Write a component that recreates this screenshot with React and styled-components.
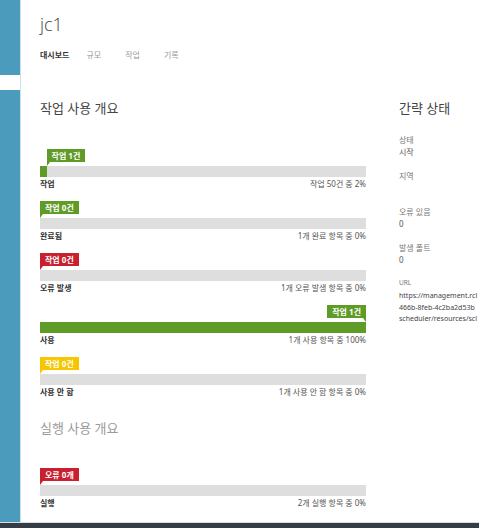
import React from "react";
import styled, { createGlobalStyle } from "styled-components";

const GlobalStyle = createGlobalStyle`
  html, body { margin: 0; padding: 0; height: 100%; }
  body {
    font-family: "Segoe UI", "Noto Sans", "Noto Sans CJK KR", sans-serif;
    background: #fff;
    overflow: hidden;
  }
  #root { height: 100%; }
`;

const Shell = styled.div`
  display: flex;
  flex-direction: column;
  height: 528px;
  overflow: hidden;
`;

const Workspace = styled.div`
  display: flex;
  flex: 1;
  min-height: 0;
`;

const Sidebar = styled.nav`
  width: 20px;
  flex: none;
  background: #4b9bbd;
  border-right: 1px solid #cfe0ea;
  display: flex;
  flex-direction: column;
`;

const SideMarker = styled.div`
  margin-top: 75px;
  height: 15px;
  background: #fff;
`;

const Footer = styled.footer`
  flex: none;
  height: 5px;
  border-top: 1px solid #d9dcdf;
  background: #343c46;
`;

const Content = styled.main`
  flex: 1;
  min-width: 0;
  padding-left: 19px;
  overflow: hidden;
`;

const Title = styled.h1`
  margin: 12px 0 0;
  font-family: "Segoe UI", "Open Sans", sans-serif;
  font-size: 18px;
  font-weight: 300;
  line-height: 24px;
  color: #444;
`;

const Tabs = styled.div`
  display: flex;
  margin-top: 13px;
`;

const Tab = styled.span`
  font-size: 8px;
  line-height: 12px;
  padding-right: ${(p) => (p.$active ? 17 : 24)}px;
  color: ${(p) => (p.$active ? "#333" : "#999")};
  font-weight: ${(p) => (p.$active ? 700 : 400)};
`;

const Body = styled.div`
  display: flex;
  margin-top: 39px;
`;

const MainColumn = styled.section`
  width: 326px;
  flex: none;
`;

const SideColumn = styled.aside`
  width: 200px;
  flex: none;
  margin-left: 33px;
`;

const Heading = styled.h2`
  margin: 0;
  font-size: 13px;
  line-height: 16px;
  font-weight: 400;
  color: ${(p) => (p.$muted ? "#9a9a9a" : "#444")};
`;

const Blocks = styled.div`
  margin-top: ${(p) => p.$top}px;
`;

const Block = styled.div`
  margin-bottom: 11px;
`;

const BadgeRow = styled.div`
  display: flex;
  justify-content: ${(p) => (p.$end ? "flex-end" : "flex-start")};
  height: 13px;
  margin-bottom: 4px;
`;

const Badge = styled.span`
  position: relative;
  height: 13px;
  line-height: 13px;
  padding: 0 5px;
  font-size: 8px;
  font-weight: 700;
  color: #fff;
  white-space: nowrap;
  background: ${(p) => p.$color};

  &::after {
    content: "";
    position: absolute;
    top: 100%;
    ${(p) => (p.$end ? "right: 0;" : "left: 0;")}
    border-top: 4px solid ${(p) => p.$color};
    ${(p) =>
      p.$end
        ? "border-left: 3px solid transparent;"
        : "border-right: 3px solid transparent;"}
  }
`;

const Track = styled.div`
  height: 11px;
  background: #dedede;
`;

const Fill = styled.div`
  height: 100%;
  background: ${(p) => p.$color};
`;

const Caption = styled.div`
  display: flex;
  justify-content: space-between;
  margin-top: 1px;
  font-size: 8px;
  line-height: 12px;
`;

const Label = styled.span`
  font-weight: 700;
  color: #333;
`;

const Summary = styled.span`
  color: #555;
`;

const InfoList = styled.dl`
  margin: 18px 0 0;
`;

const InfoItem = styled.div`
  margin-bottom: 12.5px;
`;

const InfoLabel = styled.dt`
  font-size: ${(p) => (p.$small ? 6.5 : 8)}px;
  line-height: ${(p) => (p.$small ? 10 : 11.5)}px;
  margin-bottom: ${(p) => (p.$small ? 2 : 0)}px;
  color: #777;
`;

const InfoValue = styled.dd`
  margin: 0;
  min-height: 12px;
  font-size: 8px;
  line-height: 11.5px;
  color: #555;
  white-space: nowrap;
`;

const UrlLine = styled.span`
  display: block;
  font-size: 7px;
  line-height: 11.5px;
  color: #444;
`;

const GREEN = "#5f9b27";
const RED = "#c9202f";
const YELLOW = "#f7c600";

const jobStats = [
  { badge: "작업 1건", color: GREEN, pct: 2, label: "작업", summary: "작업 50건 중 2%" },
  { badge: "작업 0건", color: GREEN, pct: 0, label: "완료됨", summary: "1개 완료 항목 중 0%" },
  { badge: "작업 0건", color: RED, pct: 0, label: "오류 발생", summary: "1개 오류 발생 항목 중 0%" },
  { badge: "작업 1건", color: GREEN, pct: 100, label: "사용", summary: "1개 사용 항목 중 100%" },
  { badge: "작업 0건", color: YELLOW, pct: 0, label: "사용 안 함", summary: "1개 사용 안 함 항목 중 0%" },
];

const runStats = [
  { badge: "오류 0개", color: RED, pct: 0, label: "실행", summary: "2개 실행 항목 중 0%" },
];

function Stat({ badge, color, pct, label, summary }) {
  const end = pct > 50;
  return (
    <Block>
      <BadgeRow $end={end}>
        <Badge
          $color={color}
          $end={end}
          style={end ? undefined : { marginLeft: `${pct}%` }}
        >
          {badge}
        </Badge>
      </BadgeRow>
      <Track>
        <Fill $color={color} style={{ width: `${pct}%` }} />
      </Track>
      <Caption>
        <Label>{label}</Label>
        <Summary>{summary}</Summary>
      </Caption>
    </Block>
  );
}

export default function App() {
  return (
    <Shell>
      <GlobalStyle />
      <Workspace>
        <Sidebar>
          <SideMarker />
        </Sidebar>
        <Content>
          <Title>jc1</Title>
          <Tabs>
            <Tab $active>대시보드</Tab>
            <Tab>규모</Tab>
            <Tab>작업</Tab>
            <Tab>기록</Tab>
          </Tabs>
          <Body>
            <MainColumn>
              <Heading>작업 사용 개요</Heading>
              <Blocks $top={33}>
                {jobStats.map((s, i) => (
                  <Stat key={i} {...s} />
                ))}
              </Blocks>
              <Heading $muted style={{ marginTop: 22 }}>실행 사용 개요</Heading>
              <Blocks $top={32}>
                {runStats.map((s, i) => (
                  <Stat key={i} {...s} />
                ))}
              </Blocks>
            </MainColumn>
            <SideColumn>
              <Heading>간략 상태</Heading>
              <InfoList>
                <InfoItem>
                  <InfoLabel>상태</InfoLabel>
                  <InfoValue>시작</InfoValue>
                </InfoItem>
                <InfoItem>
                  <InfoLabel>지역</InfoLabel>
                  <InfoValue />
                </InfoItem>
                <InfoItem>
                  <InfoLabel>오류 있음</InfoLabel>
                  <InfoValue>0</InfoValue>
                </InfoItem>
                <InfoItem>
                  <InfoLabel>발생 폴트</InfoLabel>
                  <InfoValue>0</InfoValue>
                </InfoItem>
                <InfoItem>
                  <InfoLabel $small>URL</InfoLabel>
                  <InfoValue>
                    <UrlLine>https://management.rcl</UrlLine>
                    <UrlLine>466b-8feb-4c2ba2d53b</UrlLine>
                    <UrlLine>scheduler/resources/scl</UrlLine>
                  </InfoValue>
                </InfoItem>
              </InfoList>
            </SideColumn>
          </Body>
        </Content>
      </Workspace>
      <Footer />
    </Shell>
  );
}
